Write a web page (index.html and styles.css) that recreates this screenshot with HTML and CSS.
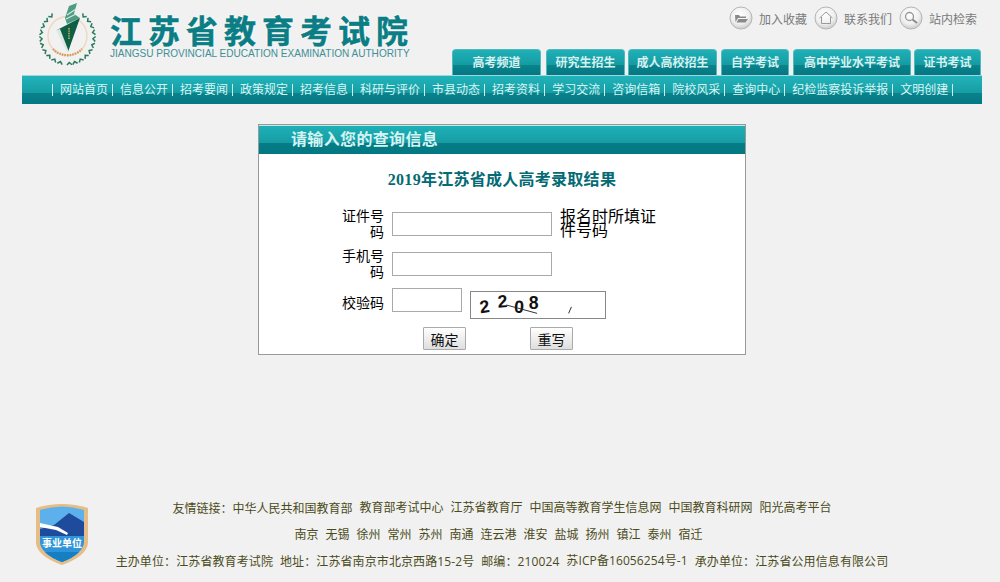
FILE: index.html
```html
<!DOCTYPE html>
<html lang="zh-CN">
<head>
    <meta charset="UTF-8">
    <title>江苏省教育考试院</title>
    <link rel="stylesheet" href="styles.css">
</head>
<body>
    <div class="wrapper">
        <div class="header">
            <div class="logo">
                <svg class="logo-mark" width="64" height="66" viewBox="0 0 64 66">
                    <defs>
                        <path id="leaf" d="M29 8 L31.5 10.5 L34 8" fill="none" stroke="#2a7a5c" stroke-width="1.5"/>
                    </defs>
                    <g>
                        <use href="#leaf" transform="rotate(38 31.5 36)"/>
                        <use href="#leaf" transform="rotate(52 31.5 36)"/>
                        <use href="#leaf" transform="rotate(66 31.5 36)"/>
                        <use href="#leaf" transform="rotate(80 31.5 36)"/>
                        <use href="#leaf" transform="rotate(94 31.5 36)"/>
                        <use href="#leaf" transform="rotate(108 31.5 36)"/>
                        <use href="#leaf" transform="rotate(122 31.5 36)"/>
                        <use href="#leaf" transform="rotate(136 31.5 36)"/>
                        <use href="#leaf" transform="rotate(150 31.5 36)"/>
                        <use href="#leaf" transform="rotate(164 31.5 36)"/>
                        <use href="#leaf" transform="rotate(176 31.5 36)"/>
                        <use href="#leaf" transform="rotate(-38 31.5 36)"/>
                        <use href="#leaf" transform="rotate(-52 31.5 36)"/>
                        <use href="#leaf" transform="rotate(-66 31.5 36)"/>
                        <use href="#leaf" transform="rotate(-80 31.5 36)"/>
                        <use href="#leaf" transform="rotate(-94 31.5 36)"/>
                        <use href="#leaf" transform="rotate(-108 31.5 36)"/>
                        <use href="#leaf" transform="rotate(-122 31.5 36)"/>
                        <use href="#leaf" transform="rotate(-136 31.5 36)"/>
                        <use href="#leaf" transform="rotate(-150 31.5 36)"/>
                        <use href="#leaf" transform="rotate(-164 31.5 36)"/>
                    </g>
                    <circle cx="31.5" cy="35" r="19.5" fill="none" stroke="#eed8bd" stroke-width="1.4"/>
                    <path d="M17 48 A20 20 0 0 0 46 48" fill="none" stroke="#d59a5a" stroke-width="2.4" stroke-dasharray="1.6 1"/>
                    <path d="M29 17 L33 5 L41 2 L38 13 L44 17 L31 23 Z" fill="#4f9b84"/>
                    <path d="M31 14 L40 8 M30 18 L40 13" stroke="#d5e9e0" stroke-width="1.2"/>
                    <path d="M21 29 L44 17 L32 51 Z" fill="#0f5f45"/>
                    <path d="M20 29 L24 28 L33 51 L31 51 Z" fill="#dbe9e2"/>
                    <path d="M33 27 L33 38" stroke="#c9b35e" stroke-width="1.6" stroke-dasharray="1.4 1"/>
                </svg>
                <div class="logo-text">
                    <div class="logo-title">江苏省教育考试院</div>
                    <div class="logo-sub">JIANGSU PROVINCIAL EDUCATION EXAMINATION AUTHORITY</div>
                </div>
            </div>
            <div class="header-right">
                <div class="top-links">
                    <a class="top-link">
                        <svg class="round-icon" width="24" height="24" viewBox="0 0 24 24">
                            <use href="#round-base"/>
                            <path d="M6 9 H10 L11 10.5 H17 V12 H9 L6.5 16 Z M9.5 13 H19 L16.5 16.5 H7.5 Z" fill="#8a8a8a"/>
                        </svg>
                        加入收藏
                    </a>
                    <a class="top-link">
                        <svg class="round-icon" width="24" height="24" viewBox="0 0 24 24">
                            <use href="#round-base"/>
                            <path d="M5.5 12 L12 6 L18.5 12 M7.5 11 V17.5 H16.5 V11" fill="none" stroke="#999" stroke-width="1"/>
                        </svg>
                        联系我们
                    </a>
                    <a class="top-link">
                        <svg class="round-icon" width="24" height="24" viewBox="0 0 24 24">
                            <use href="#round-base"/>
                            <circle cx="10.5" cy="10.5" r="4" fill="none" stroke="#999" stroke-width="1.3"/>
                            <path d="M13.5 13.5 L18 17" stroke="#888" stroke-width="1.8"/>
                        </svg>
                        站内检索
                    </a>
                </div>
                <div class="tabs">
                    <a class="tab">高考频道</a>
                    <a class="tab">研究生招生</a>
                    <a class="tab">成人高校招生</a>
                    <a class="tab">自学考试</a>
                    <a class="tab">高中学业水平考试</a>
                    <a class="tab">证书考试</a>
                </div>
            </div>
        </div>

        <ul class="nav">
            <li>网站首页</li>
            <li>信息公开</li>
            <li>招考要闻</li>
            <li>政策规定</li>
            <li>招考信息</li>
            <li>科研与评价</li>
            <li>市县动态</li>
            <li>招考资料</li>
            <li>学习交流</li>
            <li>咨询信箱</li>
            <li>院校风采</li>
            <li>查询中心</li>
            <li>纪检监察投诉举报</li>
            <li>文明创建</li>
        </ul>

        <div class="panel">
            <div class="panel-title">请输入您的查询信息</div>
            <h2 class="result-title">2019年江苏省成人高考录取结果</h2>
            <form class="query-form">
                <div class="form-row">
                    <label class="form-label">证件号码</label>
                    <input class="form-input" type="text">
                    <span class="form-hint">报名时所填证件号码</span>
                </div>
                <div class="form-row">
                    <label class="form-label">手机号码</label>
                    <input class="form-input" type="text">
                </div>
                <div class="form-row form-row-code">
                    <label class="form-label">校验码</label>
                    <input class="form-input form-input-short" type="text">
                    <svg class="captcha" width="136" height="28" viewBox="0 0 136 28">
                        <text class="captcha-digit" transform="translate(6 23) rotate(-8)">2</text>
                        <text class="captcha-digit" transform="translate(25 17) rotate(-4)">2</text>
                        <text class="captcha-digit" transform="translate(42 22) rotate(4)">0</text>
                        <text class="captcha-digit" transform="translate(58 18)">8</text>
                        <path d="M34 14 L67 23" stroke="#222" stroke-width="1"/>
                        <path d="M101 23 L104 16" stroke="#222" stroke-width="1"/>
                    </svg>
                </div>
                <div class="form-buttons">
                    <button type="button">确定</button>
                    <button type="reset">重写</button>
                </div>
            </form>
        </div>

        <div class="footer">
            <svg class="badge" width="52" height="62" viewBox="0 0 52 62">
                <path d="M0 5 Q26 -3 52 5 V40 Q51 53 26 62 Q1 53 0 40 Z" fill="#e6bd87"/>
                <path d="M4 7 Q26 0 48 7 V39 Q47 51 26 59 Q5 51 4 39 Z" fill="#5cb0ec"/>
                <path d="M4 26 L18 22 L33 10 L48 19 V33 H4 Z" fill="#1e4b9c"/>
                <path d="M4 20 L22 24 L32 30 L31 32 L20 27 L4 24 Z" fill="#fff"/>
                <path d="M4 33 H48 V39 Q47 51 26 59 Q5 51 4 39 Z" fill="#2f95d8"/>
                <path d="M9 49 H43 Q37 55 26 59 Q15 55 9 49 Z" fill="#167fc4"/>
                <text class="badge-text" x="26" y="44">事业单位</text>
            </svg>
            <div class="footer-text">
                <p class="footer-line">
                    <span>友情链接<span class="colon">：</span>中华人民共和国教育部</span>
                    <span>教育部考试中心</span>
                    <span>江苏省教育厅</span>
                    <span>中国高等教育学生信息网</span>
                    <span>中国教育科研网</span>
                    <span>阳光高考平台</span>
                </p>
                <p class="footer-line footer-cities">
                    <span>南京</span>
                    <span>无锡</span>
                    <span>徐州</span>
                    <span>常州</span>
                    <span>苏州</span>
                    <span>南通</span>
                    <span>连云港</span>
                    <span>淮安</span>
                    <span>盐城</span>
                    <span>扬州</span>
                    <span>镇江</span>
                    <span>泰州</span>
                    <span>宿迁</span>
                </p>
                <p class="footer-line footer-info">
                    <span>主办单位<span class="colon">：</span>江苏省教育考试院</span>
                    <span>地址<span class="colon">：</span>江苏省南京市北京西路15-2号</span>
                    <span>邮编<span class="colon">：</span>210024</span>
                    <span>苏ICP备16056254号-1</span>
                    <span>承办单位<span class="colon">：</span>江苏省公用信息有限公司</span>
                </p>
            </div>
        </div>
    </div>

    <svg class="svg-defs" width="0" height="0">
        <defs>
            <radialGradient id="round-fill" cx="45%" cy="35%" r="70%">
                <stop offset="0" stop-color="#ffffff"/>
                <stop offset="0.6" stop-color="#efefef"/>
                <stop offset="1" stop-color="#c4c4c4"/>
            </radialGradient>
            <g id="round-base">
                <circle cx="12" cy="12" r="11" fill="url(#round-fill)" stroke="#b5b5b5" stroke-width="1"/>
            </g>
        </defs>
    </svg>
</body>
</html>
```

FILE: styles.css
```css
body {
    font-family: "Liberation Sans", "Noto Sans CJK SC", sans-serif;
    background-color: #f1f1f1;
    margin: 0;
    color: #000;
}

.wrapper {
    width: 960px;
    margin-left: 22px;
}

.svg-defs {
    display: block;
    height: 0;
}

/* header */
.header {
    height: 75px;
    display: flex;
    justify-content: space-between;
}

.logo {
    display: flex;
    padding-left: 14px;
    padding-top: 1px;
}

.logo-mark {
    display: block;
}

.logo-text {
    margin-left: 10px;
    padding-top: 16px;
}

.logo-title {
    font-size: 32px;
    line-height: 31px;
    font-weight: bold;
    letter-spacing: 6px;
    color: #0b7d84;
    white-space: nowrap;
    -webkit-text-stroke: 0.5px #0b7d84;
    text-shadow: 0 0 2px #fff, 0 0 2px #fff, 0 0 3px #fff;
}

.logo-sub {
    font-size: 10.06px;
    line-height: 12px;
    color: #3f8f96;
    white-space: nowrap;
}

.header-right {
    width: 530px;
    display: flex;
    flex-direction: column;
    justify-content: space-between;
}

.top-links {
    display: flex;
    justify-content: flex-end;
    gap: 7px;
    padding-top: 6px;
    padding-right: 5px;
}

.top-link {
    display: flex;
    align-items: center;
    gap: 6px;
    font-size: 12px;
    color: #7a7a7a;
}

.tabs {
    display: flex;
    justify-content: flex-end;
    padding-right: 1px;
}

.tab {
    box-sizing: border-box;
    height: 26px;
    line-height: 26px;
    text-align: center;
    font-size: 12px;
    font-weight: bold;
    color: #d6f0f0;
    white-space: nowrap;
    border: 1px solid #4fb9bd;
    border-bottom: none;
    border-radius: 4px 4px 0 0;
    background: linear-gradient(#1fb0b7 0, #159ba2 60%, #0a838b 60%, #047883 100%);
}

.tab:nth-child(1) { width: 89px; margin-right: 5px; }
.tab:nth-child(2) { width: 79px; margin-right: 3px; }
.tab:nth-child(3) { width: 89px; margin-right: 4px; }
.tab:nth-child(4) { width: 68px; margin-right: 4px; }
.tab:nth-child(5) { width: 118px; margin-right: 3px; }
.tab:nth-child(6) { width: 67px; }

/* main nav */
.nav {
    list-style: none;
    margin: 0;
    height: 29px;
    box-sizing: border-box;
    padding: 8px 0 0 30px;
    display: flex;
    border-top: 1px solid #9fd8da;
    background: linear-gradient(#22b3ba 0, #169da4 60%, #0b838b 60%, #027884 100%);
}

.nav li {
    height: 12px;
    line-height: 12px;
    font-size: 12px;
    color: #d9f5f5;
    white-space: nowrap;
    padding: 0 4px 0 7px;
    border-right: 1px solid #cfeeee;
}

.nav li:first-child {
    border-left: 1px solid #cfeeee;
}

/* query panel */
.panel {
    box-sizing: border-box;
    width: 488px;
    height: 231px;
    margin: 20px 0 0 236px;
    background-color: #fff;
    border: 1px solid #999;
}

.panel-title {
    height: 29px;
    line-height: 28px;
    box-sizing: border-box;
    padding-left: 32px;
    font-size: 16px;
    font-weight: bold;
    letter-spacing: 0.35px;
    color: #d4f3f3;
    border-top: 1px solid #bfeaea;
    background: linear-gradient(#1fb0b7 0, #169ca3 62%, #067c86 62%, #027884 100%);
}

.result-title {
    margin: 15px 0 0;
    font-family: "Liberation Serif", "Noto Sans CJK SC", serif;
    font-size: 16px;
    line-height: 22px;
    font-weight: bold;
    letter-spacing: 0.27px;
    text-align: center;
    color: #046a73;
}

.query-form {
    margin-top: 17px;
    padding-left: 83px;
}

.form-row {
    display: flex;
    align-items: center;
    gap: 8px;
    height: 32px;
    margin-bottom: 8px;
}

.form-row-code {
    align-items: flex-start;
    height: 31px;
    margin-bottom: 8px;
}

.form-label {
    width: 42px;
    font-size: 14px;
    line-height: 16px;
    text-align: right;
}

.form-row-code .form-label {
    line-height: 31px;
}

.form-input {
    box-sizing: border-box;
    width: 160px;
    height: 24px;
    margin: 0;
    padding: 1px 2px;
    background-color: #fff;
    border: 1px solid #a9a9a9;
}

.form-input-short {
    width: 70px;
}

.form-hint {
    width: 100px;
    font-size: 16px;
    line-height: 14px;
}

.captcha {
    display: block;
    box-sizing: border-box;
    margin-top: 3px;
    background-color: #fff;
    border: 1px solid #888;
}

.captcha-digit {
    font-family: "Liberation Sans", sans-serif;
    font-size: 19px;
    font-weight: bold;
    fill: #111;
}

.form-buttons {
    display: flex;
    gap: 64px;
    padding-left: 81px;
}

.form-buttons button {
    box-sizing: border-box;
    width: 43px;
    height: 23px;
    padding: 0;
    font-family: "Liberation Sans", "Noto Sans CJK SC", sans-serif;
    font-size: 14px;
    color: #111;
    border: 1px solid #aaa;
    border-radius: 1px;
    background: linear-gradient(#fff, #dedede);
}

/* footer */
.footer {
    display: grid;
    grid-template-columns: 66px 1fr 66px;
    margin-top: 140px;
}

.badge {
    display: block;
    margin: 8px 0 0 14px;
}

.badge-text {
    font-size: 10px;
    font-weight: bold;
    fill: #fff;
    text-anchor: middle;
}

.footer-line {
    display: flex;
    justify-content: center;
    gap: 7px;
    margin: 0;
    font-family: "Open Sans", "Noto Sans CJK SC", sans-serif;
    font-size: 12px;
    line-height: 26px;
    color: #4b4b20;
    white-space: nowrap;
}

.footer-info {
    letter-spacing: 0.1px;
}

.colon {
    font-family: "Noto Sans CJK TC", sans-serif;
}

.footer-cities {
    padding-right: 7px;
}
```
